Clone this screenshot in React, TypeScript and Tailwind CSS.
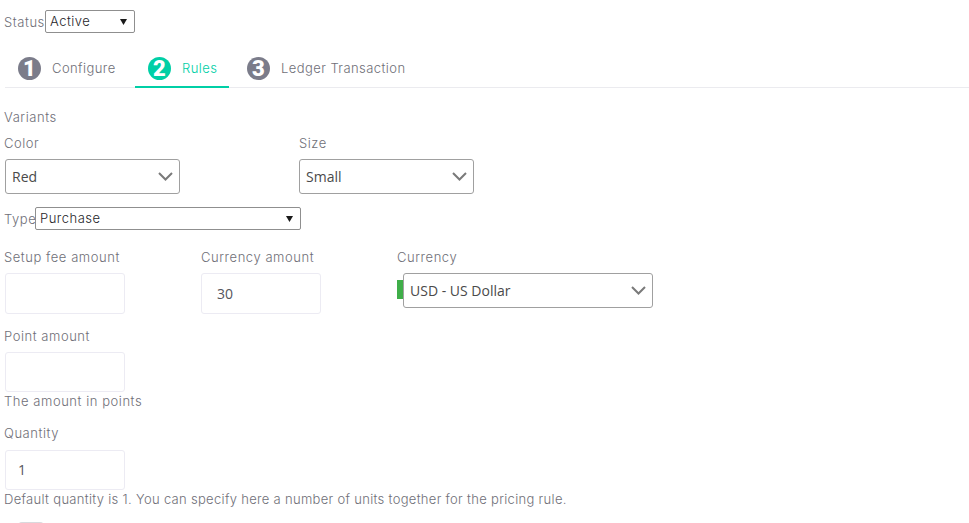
const textCls = "block text-[13px] leading-[20px] font-light text-[#6f6f78] font-['Inter',sans-serif]";
const labelCls = `${textCls} tracking-[0.55px]`;

type TabProps = { num: number; label: string; active?: boolean; className: string };

const Tab = ({ num, label, active, className }: TabProps) => (
  <div className={`flex items-center h-[38px] -mb-px pt-[1px] border-b-2 ${active ? "border-[#00cfa6]" : "border-transparent"} ${className}`}>
    <span className={`flex h-[23px] w-[23px] items-center justify-center rounded-full text-[22px] leading-none font-black text-white font-['Roboto',sans-serif] ${active ? "bg-[#00cfa6]" : "bg-[#7b7c8a]"}`}>
      {num}
    </span>
    <span className={`ml-[11px] text-[13px] font-light font-['Inter',sans-serif] tracking-[0.43px] ${active ? "text-[#00cfa6]" : "text-[#6f6f78]"}`}>{label}</span>
  </div>
);

const Chevron = () => (
  <svg width="15" height="9" viewBox="0 0 15 9" fill="none" stroke="#7a7a7a" strokeWidth="2">
    <path d="M1 1l6.5 6.5L14 1" />
  </svg>
);

const FancySelect = ({ value, className }: { value: string; className: string }) => (
  <div className={`flex h-[35px] items-center justify-between rounded-[3px] border border-[#a0a0a0] bg-white pl-[6px] pr-[6px] text-[14px] text-[#4a4a4a] font-['Open_Sans',sans-serif] ${className}`}>
    <span>{value}</span>
    <Chevron />
  </div>
);

const NativeSelect = ({ value, className }: { value: string; className: string }) => (
  <div className={`flex h-[23px] items-center justify-between rounded-[2px] border border-[#8f8f8f] bg-white pl-[4px] pr-[7px] text-[13px] font-light text-[#26262a] font-['Inter',sans-serif] tracking-[0.5px] ${className}`}>
    <span>{value}</span>
    <svg width="7" height="6" viewBox="0 0 7 6" fill="#1a1a1a">
      <path d="M0 0h7L3.5 6z" />
    </svg>
  </div>
);

const TextBox = ({ value, className }: { value?: string; className: string }) => (
  <div className={`flex w-[120px] items-center rounded-[3px] border border-[#ecebf3] bg-white pb-[1px] text-[14px] text-[#55555c] font-['Open_Sans',sans-serif] ${className}`}>
    {value}
  </div>
);

export default function App() {
  return (
    <div className="h-[523px] w-[969px] overflow-hidden bg-white pl-[4px] pt-[10px]">
      <div className="flex items-center h-[23px]">
        <span className={`${labelCls} w-[41px]`}>Status</span>
        <NativeSelect value="Active" className="w-[90px]" />
      </div>

      <div className="mt-[17px] ml-[1px] flex h-[38px] border-b border-[#ebebef]">
        <Tab num={1} label="Configure" className="pl-[13px] w-[130px]" />
        <Tab num={2} label="Rules" active className="pl-[13px] w-[94px]" />
        <Tab num={3} label="Ledger Transaction" className="pl-[18px]" />
      </div>

      <span className={`${labelCls} mt-[19px]`}>Variants</span>

      <div className="mt-[6px] flex">
        <div className="w-[295px]">
          <span className={labelCls}>Color</span>
          <FancySelect value="Red" className="mt-[6px] ml-[1px] w-[175px]" />
        </div>
        <div>
          <span className={labelCls}>Size</span>
          <FancySelect value="Small" className="mt-[6px] w-[175px]" />
        </div>
      </div>

      <div className="mt-[13px] flex items-center h-[23px]">
        <span className={`${labelCls} w-[31px]`}>Type</span>
        <NativeSelect value="Purchase" className="w-[266px]" />
      </div>

      <div className="mt-[17px] flex">
        <div className="w-[197px]">
          <span className={labelCls}>Setup fee amount</span>
          <TextBox className="mt-[6px] ml-[1px] h-[41px]" />
        </div>
        <div className="w-[196px]">
          <span className={labelCls}>Currency amount</span>
          <TextBox value="30" className="mt-[6px] h-[41px] pl-[15px]" />
        </div>
        <div>
          <span className={labelCls}>Currency</span>
          <div className="mt-[6px] flex items-start">
            <div className="mt-[7px] h-[19px] w-[6px] bg-[#3fae49]" />
            <FancySelect value="USD - US Dollar" className="w-[250px]" />
          </div>
        </div>
      </div>

      <span className={`${labelCls} mt-[12px]`}>Point amount</span>
      <TextBox className="mt-[6px] ml-[1px] h-[40px]" />
      <span className={`${labelCls} -mt-px`}>The amount in points</span>

      <span className={`${labelCls} mt-[12px]`}>Quantity</span>
      <TextBox value="1" className="mt-[7px] ml-[1px] h-[40px] pl-[12px]" />
      <span className={`${textCls} -mt-px tracking-[0.31px]`}>Default quantity is 1. You can specify here a number of units together for the pricing rule.</span>

      <div className="mt-[13px] ml-[14px] h-[16px] w-[26px] rounded-[4px] bg-[#d9d9dd]" />
    </div>
  );
}
